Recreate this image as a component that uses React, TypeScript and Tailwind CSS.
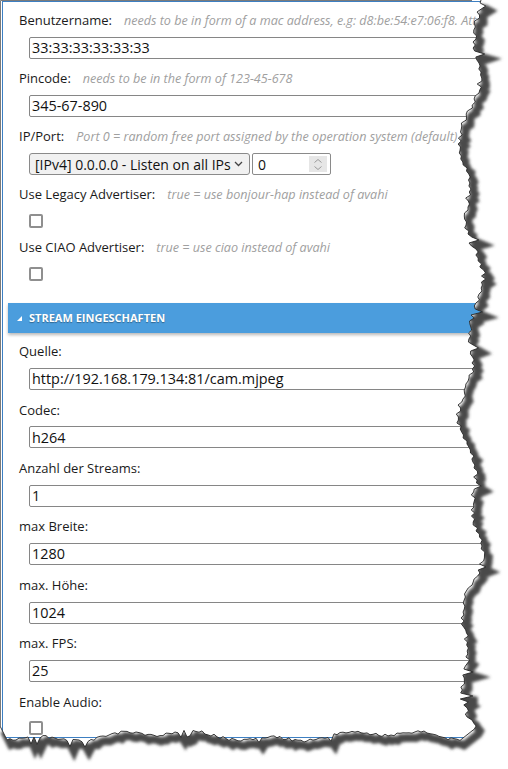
import React from 'react'

function rnd(i: number) {
  const s = Math.sin(i * 127.1 + 311.7) * 43758.5453
  return s - Math.floor(s)
}

function tornPoints() {
  const pts: string[] = []
  for (let y = 0; y <= 730; y += 3) {
    const spike = rnd(y + 77) > 0.93 ? (rnd(y + 5) - 0.3) * 12 : 0
    const x = 471 + 8 * Math.sin(y / 39 + 0.5) + 5 * Math.sin(y / 15 + 2) + (rnd(y) - 0.5) * 5 + spike
    pts.push(`${x.toFixed(1)},${y}`)
  }
  for (let x = 460; x >= 6; x -= 3) {
    const dip = rnd(x + 333) > 0.94 ? 6 : 0
    const y = 736 + 3.5 * Math.sin(x / 35) + 2.5 * Math.sin(x / 12 + 1) + (rnd(x + 1000) - 0.5) * 3 + dip
    pts.push(`${x},${y.toFixed(1)}`)
  }
  pts.push('0,726')
  return pts
}

function TornEdge() {
  const pts = tornPoints()
  const line = 'M' + pts.join(' L')
  const outside = 'M508,0 L' + pts.join(' L') + ' L0,769 L508,769 Z'
  return (
    <svg className="absolute inset-0 pointer-events-none" width="508" height="769" viewBox="0 0 508 769">
      <defs>
        <clipPath id="outside">
          <path d={outside} />
        </clipPath>
        <filter id="blur" x="-10%" y="-10%" width="120%" height="120%">
          <feGaussianBlur stdDeviation="1.6" />
        </filter>
      </defs>
      <path d={outside} fill="#ffffff" />
      <g clipPath="url(#outside)">
        <path d={line} transform="translate(4,5)" stroke="#4a4a4a" strokeWidth="8" fill="none" filter="url(#blur)" />
      </g>
      <path d={line} stroke="#262626" strokeWidth="0.9" fill="none" />
      <path d="M0.5,726 L0.5,0.5 L472,0.5" stroke="#7a7a7a" strokeWidth="1" fill="none" />
    </svg>
  )
}

function Label({ label, hint, first, tall }: { label: string; hint?: string; first?: boolean; tall?: boolean }) {
  return (
    <div className={`${first ? 'mt-[9px]' : tall ? 'mt-[10.4px]' : 'mt-[10px]'} h-[20px] flex items-center whitespace-nowrap`}>
      <span className="text-[13px] text-[#1a1a1a]">{label}</span>
      {hint && <span className="ml-[12px] italic text-[12.6px] text-[#a0a0a0]">{hint}</span>}
    </div>
  )
}

function TextBox({ value }: { value: string }) {
  return (
    <div className="mt-[6px] ml-[10px] w-[471px] h-[22px] border border-[#868686] rounded-[2px] bg-white px-[2px] flex items-center text-[14.4px] text-[#111] whitespace-nowrap">
      {value}
    </div>
  )
}

function Check() {
  return <div className="mt-[9px] ml-[10px] w-[14px] h-[14px] border-2 border-[#8f8f8f] rounded-[2px] bg-white" />
}

export default function App() {
  const streams: [string, string][] = [
    ['Quelle:', 'http://192.168.179.134:81/cam.mjpeg'],
    ['Codec:', 'h264'],
    ['Anzahl der Streams:', '1'],
    ['max Breite:', '1280'],
    ['max. Höhe:', '1024'],
    ['max. FPS:', '25'],
  ]
  return (
    <div className="relative w-[508px] h-[769px] overflow-hidden bg-white pt-[1px] font-['Open_Sans',sans-serif]">
      <div className="ml-[2px] h-[737px] border-t border-l border-b border-[#3d7fc2] bg-white">
        <div className="pl-[16px]">
          <Label first label="Benutzername:" hint="needs to be in form of a mac address, e.g: d8:be:54:e7:06:f8. Attention" />
          <TextBox value="33:33:33:33:33:33" />
          <Label label="Pincode:" hint="needs to be in the form of 123-45-678" />
          <TextBox value="345-67-890" />
          <Label label="IP/Port:" hint="Port 0 = random free port assigned by the operation system (default)" />
          <div className="mt-[6px] ml-[10px] flex gap-[2px]">
            <div className="w-[221px] h-[22px] border border-[#8a8a8a] rounded-[3px] bg-[#f1f1f1] pl-[5px] pr-[6px] flex items-center justify-between text-[14px] text-[#111] whitespace-nowrap">
              <span>[IPv4] 0.0.0.0 - Listen on all IPs</span>
              <svg width="9" height="6" viewBox="0 0 9 6">
                <path d="M1 1 L4.5 4.5 L8 1" stroke="#444" strokeWidth="1.3" fill="none" />
              </svg>
            </div>
            <div className="w-[79px] h-[22px] border border-[#8a8a8a] rounded-[2px] bg-white pl-[5px] pr-[3px] flex items-center justify-between text-[14px] text-[#111]">
              <span>0</span>
              <div className="w-[18px] h-[16px] bg-[#e6e6e6] flex flex-col items-center justify-center gap-[3px]">
                <svg width="8" height="4" viewBox="0 0 8 4">
                  <path d="M0.5 3.5 L4 0.5 L7.5 3.5" stroke="#9a9a9a" strokeWidth="1" fill="none" />
                </svg>
                <svg width="8" height="4" viewBox="0 0 8 4">
                  <path d="M0.5 0.5 L4 3.5 L7.5 0.5" stroke="#9a9a9a" strokeWidth="1" fill="none" />
                </svg>
              </div>
            </div>
          </div>
          <Label label="Use Legacy Advertiser:" hint="true = use bonjour-hap instead of avahi" />
          <Check />
          <Label label="Use CIAO Advertiser:" hint="true = use ciao instead of avahi" />
          <Check />
        </div>
        <div className="mt-[22px] ml-[5px] h-[30px] bg-[#4b9ddd] shadow-[0_2px_3px_rgba(0,0,0,0.28)] pl-[9px] flex items-center gap-[7px]">
          <svg width="5" height="5" viewBox="0 0 5 5">
            <polygon points="5,0 5,5 0,5" fill="#ffffff" />
          </svg>
          <span className="text-[11px] font-bold text-white [text-shadow:0_1px_1px_rgba(0,0,0,0.35)]">STREAM EINGESCHAFTEN</span>
        </div>
        <div className="pl-[16px]">
          {streams.map(([l, v], i) => (
            <React.Fragment key={l}>
              <Label label={l} first={i === 0} tall={i > 0} />
              <TextBox value={v} />
            </React.Fragment>
          ))}
          <Label label="Enable Audio:" tall />
          <Check />
        </div>
      </div>
      <TornEdge />
    </div>
  )
}
